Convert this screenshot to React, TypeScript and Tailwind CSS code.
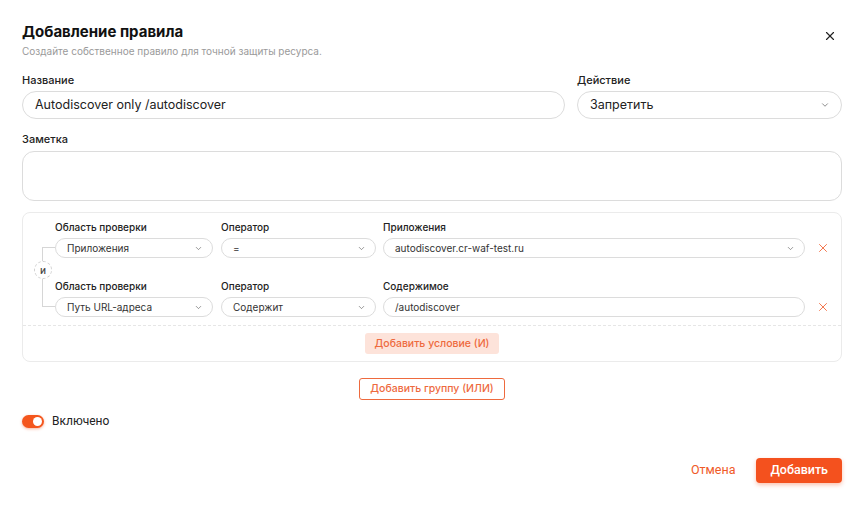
import React, { useState } from 'react';
import { ChevronDown, X } from 'lucide-react';

const font = { fontFamily: 'Inter, "Noto Sans", sans-serif' };

type Condition = {
  scope: string;
  operator: string;
  valueLabel: string;
  value: string;
  valueIsSelect: boolean;
};

const conditions: Condition[] = [
  {
    scope: 'Приложения',
    operator: '=',
    valueLabel: 'Приложения',
    value: 'autodiscover.cr-waf-test.ru',
    valueIsSelect: true,
  },
  {
    scope: 'Путь URL-адреса',
    operator: 'Содержит',
    valueLabel: 'Содержимое',
    value: '/autodiscover',
    valueIsSelect: false,
  },
];

const SmallSelect = ({ value, className }: { value: string; className?: string }) => (
  <div
    className={`flex h-[20px] items-center justify-between rounded-full border border-[#dcdcdc] bg-white pl-[11px] pr-[9px] text-[10px] text-[#333] ${className ?? ''}`}
  >
    <span>{value}</span>
    <ChevronDown size={9} strokeWidth={1.6} className="text-[#555]" />
  </div>
);

const SmallInput = ({ value, className }: { value: string; className?: string }) => (
  <div
    className={`flex h-[20px] items-center rounded-full border border-[#dcdcdc] bg-white pl-[11px] text-[10px] text-[#333] ${className ?? ''}`}
  >
    {value}
  </div>
);

const ConditionRow = ({ c }: { c: Condition }) => (
  <div className="flex items-end">
    <div className="w-[158px]">
      <div className="mb-[4px] text-[10px] font-medium leading-[14px] text-[#222]">Область проверки</div>
      <SmallSelect value={c.scope} />
    </div>
    <div className="ml-[8px] w-[155px]">
      <div className="mb-[4px] text-[10px] font-medium leading-[14px] text-[#222]">Оператор</div>
      <SmallSelect value={c.operator} />
    </div>
    <div className="ml-[7px] flex-1">
      <div className="mb-[4px] text-[10px] font-medium leading-[14px] text-[#222]">{c.valueLabel}</div>
      {c.valueIsSelect ? <SmallSelect value={c.value} /> : <SmallInput value={c.value} />}
    </div>
    <div className="flex h-[20px] w-[36px] items-center justify-center">
      <X size={14} strokeWidth={1.4} className="text-[#f05a28]" />
    </div>
  </div>
);

export default function App() {
  const [enabled, setEnabled] = useState(true);

  return (
    <div className="min-h-[506px] w-full bg-white px-[22px] pt-[22px]" style={font}>
      <div className="flex items-start justify-between">
        <div>
          <h2 className="text-[15px] font-bold leading-5 text-[#111]">Добавление правила</h2>
          <p className="mt-[2px] text-[10px] leading-[14px] text-[#9a9a9a]">
            Создайте собственное правило для точной защиты ресурса.
          </p>
        </div>
        <button type="button" className="mr-[5px] mt-[7px] text-[#222]" aria-label="Close">
          <X size={14} strokeWidth={2} />
        </button>
      </div>

      <div className="mt-[15px] flex gap-[12px]">
        <div className="flex-1">
          <div className="mb-[4px] text-[11px] font-medium leading-[14px] text-[#222]">Название</div>
          <div className="flex h-[28px] items-center rounded-full border border-[#dcdcdc] px-[12px] text-[12.5px] text-[#222]">
            Autodiscover only /autodiscover
          </div>
        </div>
        <div className="w-[265px]">
          <div className="mb-[4px] text-[11px] font-medium leading-[14px] text-[#222]">Действие</div>
          <div className="flex h-[28px] items-center justify-between rounded-full border border-[#dcdcdc] pl-[12px] pr-[11px] text-[12.5px] text-[#222]">
            <span>Запретить</span>
            <ChevronDown size={10} strokeWidth={1.6} className="text-[#555]" />
          </div>
        </div>
      </div>

      <div className="mt-[13px]">
        <div className="mb-[5px] text-[11px] font-medium leading-[14px] text-[#222]">Заметка</div>
        <div className="h-[50px] rounded-[12px] border border-[#dcdcdc]" />
      </div>

      <div className="mt-[11px] rounded-[8px] border border-[#ebebeb]">
        <div className="relative pl-[32px] pt-[7px]">
          {/* connector between the AND conditions */}
          <div className="absolute left-[19px] top-[34px] h-[60px] w-[13px] border-y border-l border-[#d6d6d6]" />
          <div className="absolute left-[11px] top-[48px] flex h-[18px] w-[18px] items-center justify-center rounded-full border border-dashed border-[#cfcfcf] bg-white text-[10px] font-medium text-[#444]">
            и
          </div>
          <div className="flex flex-col gap-[21px]">
            {conditions.map((c, i) => (
              <ConditionRow key={i} c={c} />
            ))}
          </div>
        </div>
        <div className="mt-[8px] border-t border-dashed border-[#e6e6e6] pb-[7px] pt-[7px]">
          <div className="flex justify-center">
            <button
              type="button"
              className="h-[21px] rounded-[3px] bg-[#fde3da] px-[10px] text-[10.5px] font-medium text-[#ee6a3e]"
            >
              Добавить условие (И)
            </button>
          </div>
        </div>
      </div>

      <div className="mt-[16px] flex justify-center">
        <button
          type="button"
          className="h-[22px] rounded-[3px] border border-[#ee6a3e] bg-white px-[10px] text-[10.5px] font-medium text-[#ee6a3e]"
        >
          Добавить группу (ИЛИ)
        </button>
      </div>

      <div className="mt-[12px] flex items-center gap-[8px]">
        <button
          type="button"
          onClick={() => setEnabled(!enabled)}
          className={`flex h-[13px] w-[22px] items-center rounded-full px-[2px] shadow-[0_1px_3px_rgba(240,90,40,0.45)] ${
            enabled ? 'justify-end bg-[#f4561d]' : 'justify-start bg-[#ccc]'
          }`}
        >
          <span className="h-[9px] w-[9px] rounded-full bg-white" />
        </button>
        <span className="text-[12px] text-[#222]" style={{ fontFamily: 'Roboto, sans-serif' }}>
          Включено
        </span>
      </div>

      <div className="mt-[28px] flex items-center justify-end gap-[21px]" style={{ fontFamily: 'Roboto, sans-serif' }}>
        <button type="button" className="text-[12.5px] text-[#f05a28]">
          Отмена
        </button>
        <button
          type="button"
          className="h-[25px] rounded-[4px] bg-[#f4511e] px-[14px] text-[12.5px] font-medium text-white shadow-[0_2px_4px_rgba(240,80,30,0.35)]"
        >
          Добавить
        </button>
      </div>
    </div>
  );
}
